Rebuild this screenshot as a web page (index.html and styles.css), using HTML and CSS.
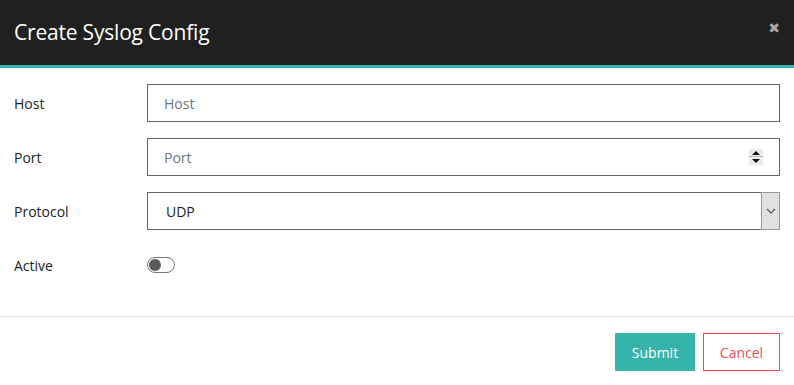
FILE: index.html
```html
<!DOCTYPE html>
<html>
<head lang="en">
    <meta charset="utf-8">
    <title>Create Syslog Config</title>
    <link rel="stylesheet" href="styles.css">
</head>
<body>
<div class="modal">
    <div class="modal-header">
        <span class="modal-title">Create Syslog Config</span>
        <span class="close">&#x2716;</span>
    </div>
    <div class="modal-body">
        <div class="form-row">
            <label class="form-label">Host</label>
            <input type="text" class="form-input" placeholder="Host">
        </div>
        <div class="form-row">
            <label class="form-label">Port</label>
            <div class="number-wrap">
                <input type="text" class="form-input" placeholder="Port">
                <span class="spinner">
                    <span class="spin up"></span>
                    <span class="spin down"></span>
                </span>
            </div>
        </div>
        <div class="form-row">
            <label class="form-label">Protocol</label>
            <div class="select-wrap">
                <span class="select-value">UDP</span>
                <span class="select-arrow">
                    <svg width="10" height="6" viewBox="0 0 10 6"><path d="M1 1 L5 5 L9 1" fill="none" stroke="#555" stroke-width="1.2"/></svg>
                </span>
            </div>
        </div>
        <div class="form-row">
            <label class="form-label">Active</label>
            <span class="toggle"><span class="knob"></span></span>
        </div>
    </div>
    <div class="modal-footer">
        <div class="button submit">Submit</div>
        <div class="button cancel">Cancel</div>
    </div>
</div>
</body>
</html>
```

FILE: styles.css
```css
body {
    margin: 0;
    font-family: "Open Sans", "Noto Sans", sans-serif;
    background: #fff;
}

.modal {
    width: 794px;
    height: 385px;
    display: flex;
    flex-direction: column;
}

.modal-header {
    height: 65px;
    background: #202020;
    border-bottom: 3px solid #3ab3aa;
    display: flex;
    align-items: center;
    justify-content: space-between;
    padding: 0 14px;
}

.modal-title {
    color: #fff;
    font-size: 21px;
    letter-spacing: -0.2px;
    margin-top: -2px;
}

.close {
    color: #a8a8a8;
    font-size: 14px;
    font-weight: bold;
    font-family: "DejaVu Sans", sans-serif;
    margin-top: -10px;
    margin-right: 0;
}

.modal-body {
    padding: 16px 14px 32px 14px;
    display: flex;
    flex-direction: column;
    gap: 16px;
}

.form-row {
    height: 38px;
    display: flex;
    align-items: center;
}

.form-label {
    width: 133px;
    flex-shrink: 0;
    font-size: 14px;
    color: #222;
}

.form-input {
    flex: 1;
    height: 38px;
    box-sizing: border-box;
    border: 1px solid #666;
    padding: 0 16px;
    font-family: inherit;
    font-size: 14px;
    outline: none;
    width: 100%;
}

.form-input::placeholder {
    color: #6c757d;
}

.number-wrap {
    flex: 1;
    position: relative;
    display: flex;
}

.spinner {
    position: absolute;
    right: 17px;
    top: 11px;
    width: 14px;
    height: 16px;
    background: #ececec;
    display: flex;
    flex-direction: column;
    justify-content: space-between;
}

.spin {
    height: 7px;
    position: relative;
}

.spin::after {
    content: "";
    position: absolute;
    left: 3px;
    width: 0;
    height: 0;
    border-left: 4px solid transparent;
    border-right: 4px solid transparent;
}

.spin.up::after {
    top: 2px;
    border-bottom: 4px solid #111;
}

.spin.down::after {
    top: 1px;
    border-top: 4px solid #111;
}

.spin.up {
    border-bottom: 1px solid #bbb;
}

.select-wrap {
    flex: 1;
    height: 38px;
    box-sizing: border-box;
    border: 1px solid #666;
    display: flex;
    align-items: stretch;
}

.select-value {
    flex: 1;
    display: flex;
    align-items: center;
    padding-left: 18px;
    font-size: 14px;
    color: #222;
}

.select-arrow {
    width: 17px;
    background: #e1e1e1;
    border: 1px solid #9a9a9a;
    display: flex;
    align-items: center;
    justify-content: center;
    margin: -1px -1px -1px 0;
}

.toggle {
    width: 28px;
    height: 16px;
    box-sizing: border-box;
    border: 1px solid #777;
    border-radius: 8px;
    display: flex;
    align-items: center;
    padding-left: 1px;
}

.knob {
    width: 12px;
    height: 12px;
    border-radius: 50%;
    background: #5a5a5a;
}

.modal-footer {
    border-top: 1px solid #e2e4e8;
    padding: 16px 14px 0 14px;
    display: flex;
    justify-content: flex-end;
    gap: 8px;
}

.button {
    height: 38px;
    box-sizing: border-box;
    display: flex;
    align-items: center;
    justify-content: center;
    font-size: 14px;
    cursor: pointer;
}

.button.submit {
    width: 80px;
    background: #36b3aa;
    color: #fff;
}

.button.cancel {
    width: 77px;
    border: 1px solid #ef4d57;
    color: #ef4d57;
}
```
